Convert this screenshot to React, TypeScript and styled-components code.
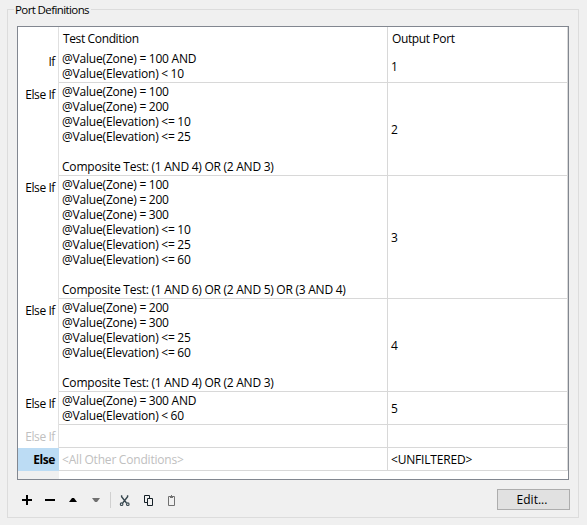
import React from "react";
import styled, { createGlobalStyle } from "styled-components";

const GlobalStyle = createGlobalStyle`
  * { box-sizing: border-box; }
  body {
    margin: 0;
    background: #f0f0f0;
    color: #000;
    font: 12px/15px "Open Sans", "Noto Sans", sans-serif;
    overflow: hidden;
  }
`;

const Page = styled.main`
  width: 587px;
  height: 525px;
  padding: 2px 8px 7px 7px;
`;

const GroupBox = styled.fieldset`
  display: block;
  width: 572px;
  height: 516px;
  margin: 0;
  padding: 0;
  border: 1px solid #dcdcdc;
`;

const GroupTitle = styled.legend`
  height: 15px;
  margin-left: 6px;
  padding: 0 2px 0 1px;
  font-size: 11.5px;
  letter-spacing: -0.6px;
`;

const TableFrame = styled.section`
  width: 552px;
  height: 454px;
  margin: 9px 0 0 9px;
  border: 1px solid #828790;
  background: #fff;
`;

const Row = styled.div<{ $height: number }>`
  display: grid;
  grid-template-columns: 41px 329px 180px;
  height: ${(p) => p.$height}px;
`;

const Stub = styled.div`
  border-right: 1px solid #e0e0e0;
`;

const ColumnTitle = styled.div`
  padding: 4px 0 0 4px;
  border-right: 1px solid #d8d8d8;
  letter-spacing: -0.37px;
`;

const RowLabel = styled.div<{ $tone?: "muted" | "selected" }>`
  display: flex;
  justify-content: flex-end;
  padding: 4px 3px 0 0;
  border-right: 1px solid ${(p) => (p.$tone === "selected" ? "#bcdcf4" : "#e0e0e0")};
  color: ${(p) => (p.$tone === "muted" ? "#c0c0c0" : "#000")};
  background: ${(p) => (p.$tone === "selected" ? "#bcdcf4" : "#fff")};
  font-weight: ${(p) => (p.$tone === "selected" ? 700 : 400)};
  letter-spacing: -0.42px;
`;

const Cell = styled.div<{ $muted?: boolean }>`
  display: flex;
  align-items: center;
  padding-left: 3px;
  border: 0 solid #d8d8d8;
  border-width: 0 1px 1px 0;
  color: ${(p) => (p.$muted ? "#c0c0c0" : "#000")};
  letter-spacing: -0.19px;
  word-spacing: -0.22px;
  white-space: pre;
`;

const TableEnd = styled.div`
  width: 41px;
  height: 8px;
  background: #f0f0f0;
`;

const Footer = styled.footer`
  display: flex;
  justify-content: space-between;
  height: 21px;
  margin: 9px 8px 0 9px;
`;

const Toolbar = styled.div`
  display: flex;
  align-items: center;
  padding-left: 2px;
`;

const ToolButton = styled.button`
  width: 16px;
  height: 16px;
  margin-right: 7px;
  padding: 0;
  border: 0;
  background: none;

  svg { display: block; }
`;

const Separator = styled.i`
  width: 1px;
  height: 16px;
  margin: 0 6px 0 -1px;
  background: #d0d0d0;
`;

const EditButton = styled.button`
  width: 73px;
  height: 21px;
  padding: 0 3px 0 0;
  border: 1px solid #adadad;
  background: #e1e1e1;
  color: #000;
  font: inherit;
`;

type RowData = {
  label: string;
  lines: string[];
  port: string;
  height: number;
  tone?: "muted" | "selected";
};

const rows: RowData[] = [
  { label: "If", height: 33, port: "1", lines: ["@Value(Zone) = 100 AND", "@Value(Elevation) < 10"] },
  {
    label: "Else If", height: 93, port: "2",
    lines: ["@Value(Zone) = 100", "@Value(Zone) = 200", "@Value(Elevation) <= 10", "@Value(Elevation) <= 25", "", "Composite Test: (1 AND 4) OR (2 AND 3)"],
  },
  {
    label: "Else If", height: 123, port: "3",
    lines: ["@Value(Zone) = 100", "@Value(Zone) = 200", "@Value(Zone) = 300", "@Value(Elevation) <= 10", "@Value(Elevation) <= 25", "@Value(Elevation) <= 60", "", "Composite Test: (1 AND 6) OR (2 AND 5) OR (3 AND 4)"],
  },
  {
    label: "Else If", height: 93, port: "4",
    lines: ["@Value(Zone) = 200", "@Value(Zone) = 300", "@Value(Elevation) <= 25", "@Value(Elevation) <= 60", "", "Composite Test: (1 AND 4) OR (2 AND 3)"],
  },
  { label: "Else If", height: 33, port: "5", lines: ["@Value(Zone) = 300 AND", "@Value(Elevation) < 60"] },
  { label: "Else If", height: 23, port: "", lines: [], tone: "muted" },
  { label: "Else", height: 23, port: "<UNFILTERED>", lines: ["<All Other Conditions>"], tone: "selected" },
];

const Icon = ({ children }: { children: React.ReactNode }) => (
  <svg width="16" height="16" viewBox="0 0 16 16" fill="none">{children}</svg>
);

export default function App() {
  return (
    <>
      <GlobalStyle />
      <Page>
        <GroupBox>
          <GroupTitle>Port Definitions</GroupTitle>
          <TableFrame>
            <Row $height={23}>
              <Stub />
              <ColumnTitle>Test Condition</ColumnTitle>
              <ColumnTitle>Output Port</ColumnTitle>
            </Row>
            {rows.map((row, i) => (
              <Row key={i} $height={row.height}>
                <RowLabel $tone={row.tone}>{row.label}</RowLabel>
                <Cell $muted={row.tone === "selected"}>{row.lines.join("\n")}</Cell>
                <Cell>{row.port}</Cell>
              </Row>
            ))}
            <TableEnd />
          </TableFrame>
          <Footer>
            <Toolbar>
              <ToolButton aria-label="Add"><Icon><path d="M3 8h10M8 3v10" stroke="#000" strokeWidth="2" /></Icon></ToolButton>
              <ToolButton aria-label="Remove"><Icon><path d="M3 8h10" stroke="#000" strokeWidth="2" /></Icon></ToolButton>
              <ToolButton aria-label="Move up"><Icon><path d="M4 10l3-4h2l3 4z" fill="#000" /></Icon></ToolButton>
              <ToolButton aria-label="Move down"><Icon><path d="M4 6h8l-3 4h-2z" fill="#707070" /></Icon></ToolButton>
              <Separator />
              <ToolButton aria-label="Cut">
                <Icon>
                  <path d="M4.6 3.2v1.6l4.9 6.2M10.6 3.2v1.6L5.7 11" stroke="#37474f" strokeWidth="1.4" />
                  <circle cx="4.6" cy="12.2" r="1.3" stroke="#37474f" strokeWidth="1.1" />
                  <circle cx="10.8" cy="12.2" r="1.3" stroke="#37474f" strokeWidth="1.1" />
                </Icon>
              </ToolButton>
              <ToolButton aria-label="Copy">
                <Icon><path d="M7.5 10.5h-3v-7h5v3M7.5 6.5h5v7h-5z" stroke="#152027" /></Icon>
              </ToolButton>
              <ToolButton aria-label="Paste">
                <Icon>
                  <path d="M5.5 4.5h6v9h-6z" stroke="#707070" />
                  <path d="M7 4h1V3h1v1h1v2H7z" fill="#707070" />
                </Icon>
              </ToolButton>
            </Toolbar>
            <EditButton>Edit...</EditButton>
          </Footer>
        </GroupBox>
      </Page>
    </>
  );
}
